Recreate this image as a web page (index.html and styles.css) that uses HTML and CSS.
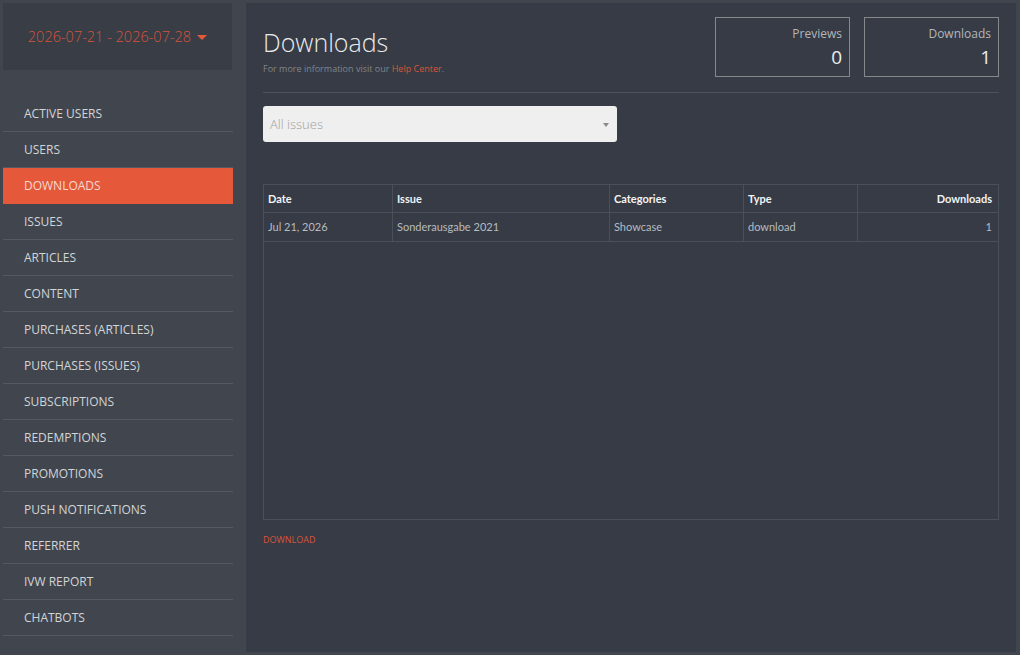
FILE: index.html
```html
<!DOCTYPE html>
<html lang="en">
<head>
    <meta charset="UTF-8">
    <title>Downloads</title>
    <link rel="stylesheet" href="styles.css">
</head>
<body>
    <div class="sidebar">
        <div class="date-range">
            2026-07-21 - 2026-07-28 <span class="caret"></span>
        </div>
        <ul class="nav">
            <li>ACTIVE USERS</li>
            <li>USERS</li>
            <li class="active">DOWNLOADS</li>
            <li>ISSUES</li>
            <li>ARTICLES</li>
            <li>CONTENT</li>
            <li>PURCHASES (ARTICLES)</li>
            <li>PURCHASES (ISSUES)</li>
            <li>SUBSCRIPTIONS</li>
            <li>REDEMPTIONS</li>
            <li>PROMOTIONS</li>
            <li>PUSH NOTIFICATIONS</li>
            <li>REFERRER</li>
            <li>IVW REPORT</li>
            <li>CHATBOTS</li>
        </ul>
    </div>

    <div class="main">
        <div class="header">
            <div class="title">
                <h1>Downloads</h1>
                <p class="hint">For more information visit our <a href="#">Help Center</a>.</p>
            </div>
            <div class="stats">
                <div class="stat">
                    <span class="stat-label">Previews</span>
                    <span class="stat-value">0</span>
                </div>
                <div class="stat">
                    <span class="stat-label">Downloads</span>
                    <span class="stat-value">1</span>
                </div>
            </div>
        </div>

        <div class="select">
            <span>All issues</span>
            <span class="select-caret"></span>
        </div>

        <div class="table-wrap">
            <table>
                <thead>
                    <tr>
                        <th class="c-date">Date</th>
                        <th class="c-issue">Issue</th>
                        <th class="c-cat">Categories</th>
                        <th class="c-type">Type</th>
                        <th class="num">Downloads</th>
                    </tr>
                </thead>
                <tbody>
                    <tr>
                        <td>Jul 21, 2026</td>
                        <td>Sonderausgabe 2021</td>
                        <td>Showcase</td>
                        <td>download</td>
                        <td class="num">1</td>
                    </tr>
                </tbody>
            </table>
        </div>

        <a class="export" href="#">DOWNLOAD</a>
    </div>
</body>
</html>
```

FILE: styles.css
```css
body {
    margin: 0;
    padding: 3px 4px 3px 3px;
    height: 655px;
    box-sizing: border-box;
    background-color: #41464e;
    font-family: "Open Sans", sans-serif;
    display: flex;
    gap: 13px;
}
.sidebar {
    width: 230px;
    flex-shrink: 0;
}
.date-range {
    height: 67px;
    background-color: #383d46;
    color: #d4553b;
    font-size: 14.5px;
    font-weight: 300;
    display: flex;
    align-items: center;
    justify-content: center;
    gap: 6px;
    margin-right: 1px;
}
.caret {
    width: 0;
    height: 0;
    border-left: 5px solid transparent;
    border-right: 5px solid transparent;
    border-top: 5px solid #e5583a;
    margin-top: 1px;
}
.nav {
    list-style: none;
    margin: 26px 0 0 0;
    padding: 0;
}
.nav li {
    height: 36px;
    box-sizing: border-box;
    border-bottom: 1px solid #555a61;
    padding-left: 21px;
    display: flex;
    align-items: center;
    font-size: 12px;
    color: #d2d5d8;
}
.nav li.active {
    background-color: #e5583a;
    color: #f6d8cf;
    border-bottom-color: #e5583a;
}
.main {
    flex: 1;
    background-color: #363b45;
    padding: 14px 17px 0 17px;
}
.header {
    display: flex;
    justify-content: space-between;
    border-bottom: 1px solid #4e535b;
    padding-bottom: 15px;
}
.title h1 {
    margin: 8px 0 0 0;
    font-size: 25px;
    font-weight: 300;
    color: #e9eaeb;
    line-height: 34px;
}
.hint {
    margin: 3px 0 0 0;
    font-size: 9px;
    color: #80858c;
}
.hint a {
    color: #d9553a;
    text-decoration: none;
}
.stats {
    display: flex;
    gap: 14px;
}
.stat {
    width: 135px;
    height: 60px;
    box-sizing: border-box;
    border: 1px solid #86888b;
    padding: 7px 7px 0 0;
    display: flex;
    flex-direction: column;
    align-items: flex-end;
}
.stat-label {
    font-size: 12px;
    color: #b3b6ba;
}
.stat-value {
    font-size: 19px;
    color: #eceded;
    margin-top: 2px;
}
.select {
    margin-top: 13px;
    width: 354px;
    height: 36px;
    box-sizing: border-box;
    background-color: #efefef;
    border-radius: 3px;
    padding: 0 8px 0 7px;
    display: flex;
    align-items: center;
    justify-content: space-between;
    font-size: 13px;
    font-weight: 300;
    color: #a0a0a0;
}
.select-caret {
    width: 0;
    height: 0;
    border-left: 3px solid transparent;
    border-right: 3px solid transparent;
    border-top: 4px solid #8a8a8a;
    margin-top: 2px;
}
.table-wrap {
    margin-top: 42px;
    height: 336px;
    box-sizing: border-box;
    border: 1px solid #4a505a;
}
table {
    width: 100%;
    border-collapse: collapse;
    font-family: Lato, sans-serif;
    font-size: 11px;
}
th, td {
    text-align: left;
    padding: 0 4px;
    border: 1px solid #4a505a;
}
tr > :first-child {
    border-left: none;
}
tr > :last-child {
    border-right: none;
}
thead tr:first-child th {
    border-top: none;
}
th {
    height: 27px;
    color: #f2f3f4;
    font-weight: bold;
}
td {
    height: 26px;
    color: #b7bbc0;
    padding-bottom: 2px;
}
.c-date { width: 120px; }
.c-issue { width: 208px; }
.c-cat { width: 125px; }
.c-type { width: 105px; }
.num {
    text-align: right;
    padding-right: 6px;
}
.export {
    display: inline-block;
    margin-top: 13px;
    font-size: 9px;
    color: #d9553a;
    text-decoration: none;
}
```
